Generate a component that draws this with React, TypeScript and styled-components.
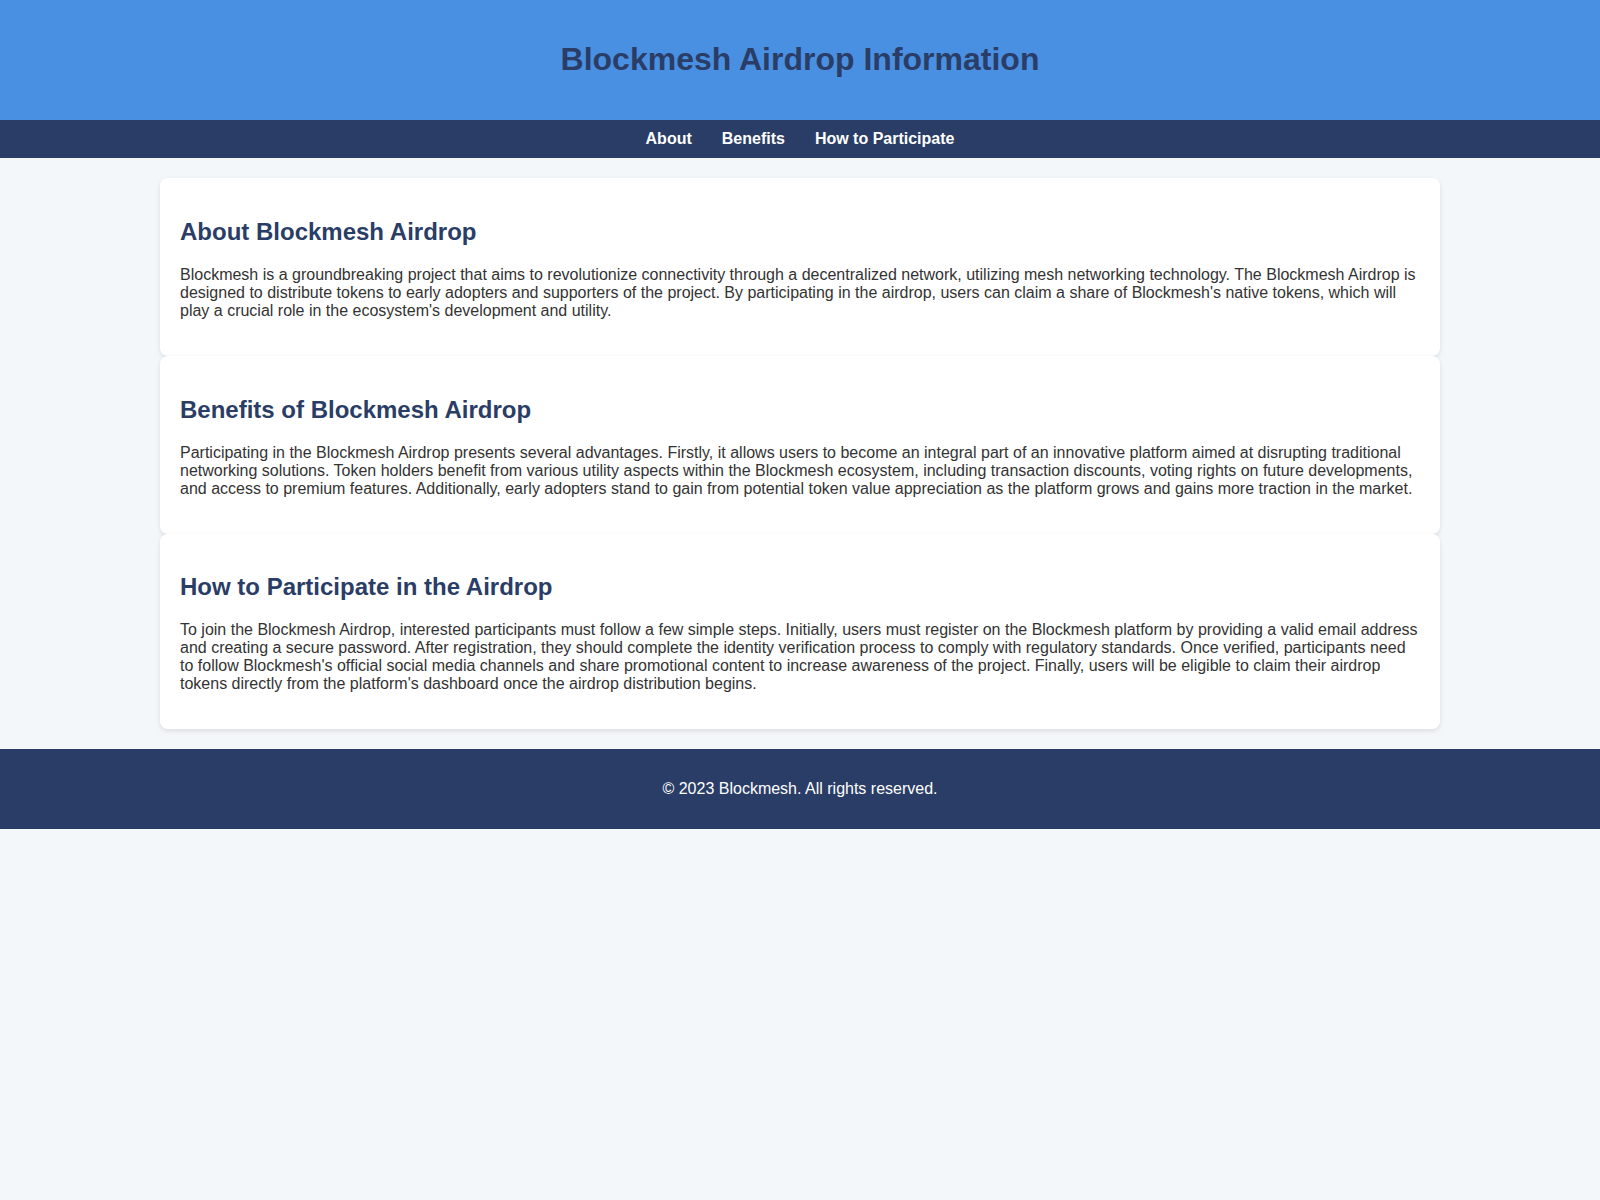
import React from "react"
import styled, { createGlobalStyle } from "styled-components"

const GlobalStyle = createGlobalStyle`
  body {
    margin: 0;
    padding: 0;
    font-family: "Liberation Sans", Arial, sans-serif;
    background-color: #f4f7fa;
    color: #333;
  }
`

const Header = styled.header`
  background-color: #4a90e2;
  padding: 20px;
  text-align: center;
`

const Title = styled.h1`
  margin: 0.67em 0;
  font-size: 32px;
  color: #2a3d66;
`

const Nav = styled.nav`
  background-color: #2a3d66;
  padding: 10px;
  text-align: center;
`

const NavLink = styled.a`
  color: #fff;
  font-weight: bold;
  text-decoration: none;
  margin: 0 15px;
`

const Main = styled.main`
  padding: 20px 0;
`

const Section = styled.section`
  background-color: #fff;
  width: 80%;
  margin: 0 auto;
  padding: 20px;
  box-sizing: border-box;
  border-radius: 8px;
  box-shadow: 0 2px 5px rgba(0, 0, 0, 0.1);
`

const Heading = styled.h2`
  font-size: 24px;
  color: #2a3d66;
  margin: 0.83em 0;
`

const Text = styled.p`
  margin: 16px 0;
  line-height: normal;
`

const Footer = styled.footer`
  background-color: #2a3d66;
  color: #fff;
  text-align: center;
  padding: 15px;
`

const sections = [
  {
    id: "about",
    title: "About Blockmesh Airdrop",
    body: "Blockmesh is a groundbreaking project that aims to revolutionize connectivity through a decentralized network, utilizing mesh networking technology. The Blockmesh Airdrop is designed to distribute tokens to early adopters and supporters of the project. By participating in the airdrop, users can claim a share of Blockmesh's native tokens, which will play a crucial role in the ecosystem's development and utility.",
  },
  {
    id: "benefits",
    title: "Benefits of Blockmesh Airdrop",
    body: "Participating in the Blockmesh Airdrop presents several advantages. Firstly, it allows users to become an integral part of an innovative platform aimed at disrupting traditional networking solutions. Token holders benefit from various utility aspects within the Blockmesh ecosystem, including transaction discounts, voting rights on future developments, and access to premium features. Additionally, early adopters stand to gain from potential token value appreciation as the platform grows and gains more traction in the market.",
  },
  {
    id: "participate",
    title: "How to Participate in the Airdrop",
    body: "To join the Blockmesh Airdrop, interested participants must follow a few simple steps. Initially, users must register on the Blockmesh platform by providing a valid email address and creating a secure password. After registration, they should complete the identity verification process to comply with regulatory standards. Once verified, participants need to follow Blockmesh's official social media channels and share promotional content to increase awareness of the project. Finally, users will be eligible to claim their airdrop tokens directly from the platform's dashboard once the airdrop distribution begins.",
  },
]

export default function App() {
  return (
    <>
      <GlobalStyle />
      <Header>
        <Title>Blockmesh Airdrop Information</Title>
      </Header>
      <Nav>
        <NavLink href="#about">About</NavLink>
        <NavLink href="#benefits">Benefits</NavLink>
        <NavLink href="#participate">How to Participate</NavLink>
      </Nav>
      <Main>
        {sections.map((s) => (
          <Section key={s.id} id={s.id}>
            <Heading>{s.title}</Heading>
            <Text>{s.body}</Text>
          </Section>
        ))}
      </Main>
      <Footer>
        <Text>&copy; 2023 Blockmesh. All rights reserved.</Text>
      </Footer>
    </>
  )
}
